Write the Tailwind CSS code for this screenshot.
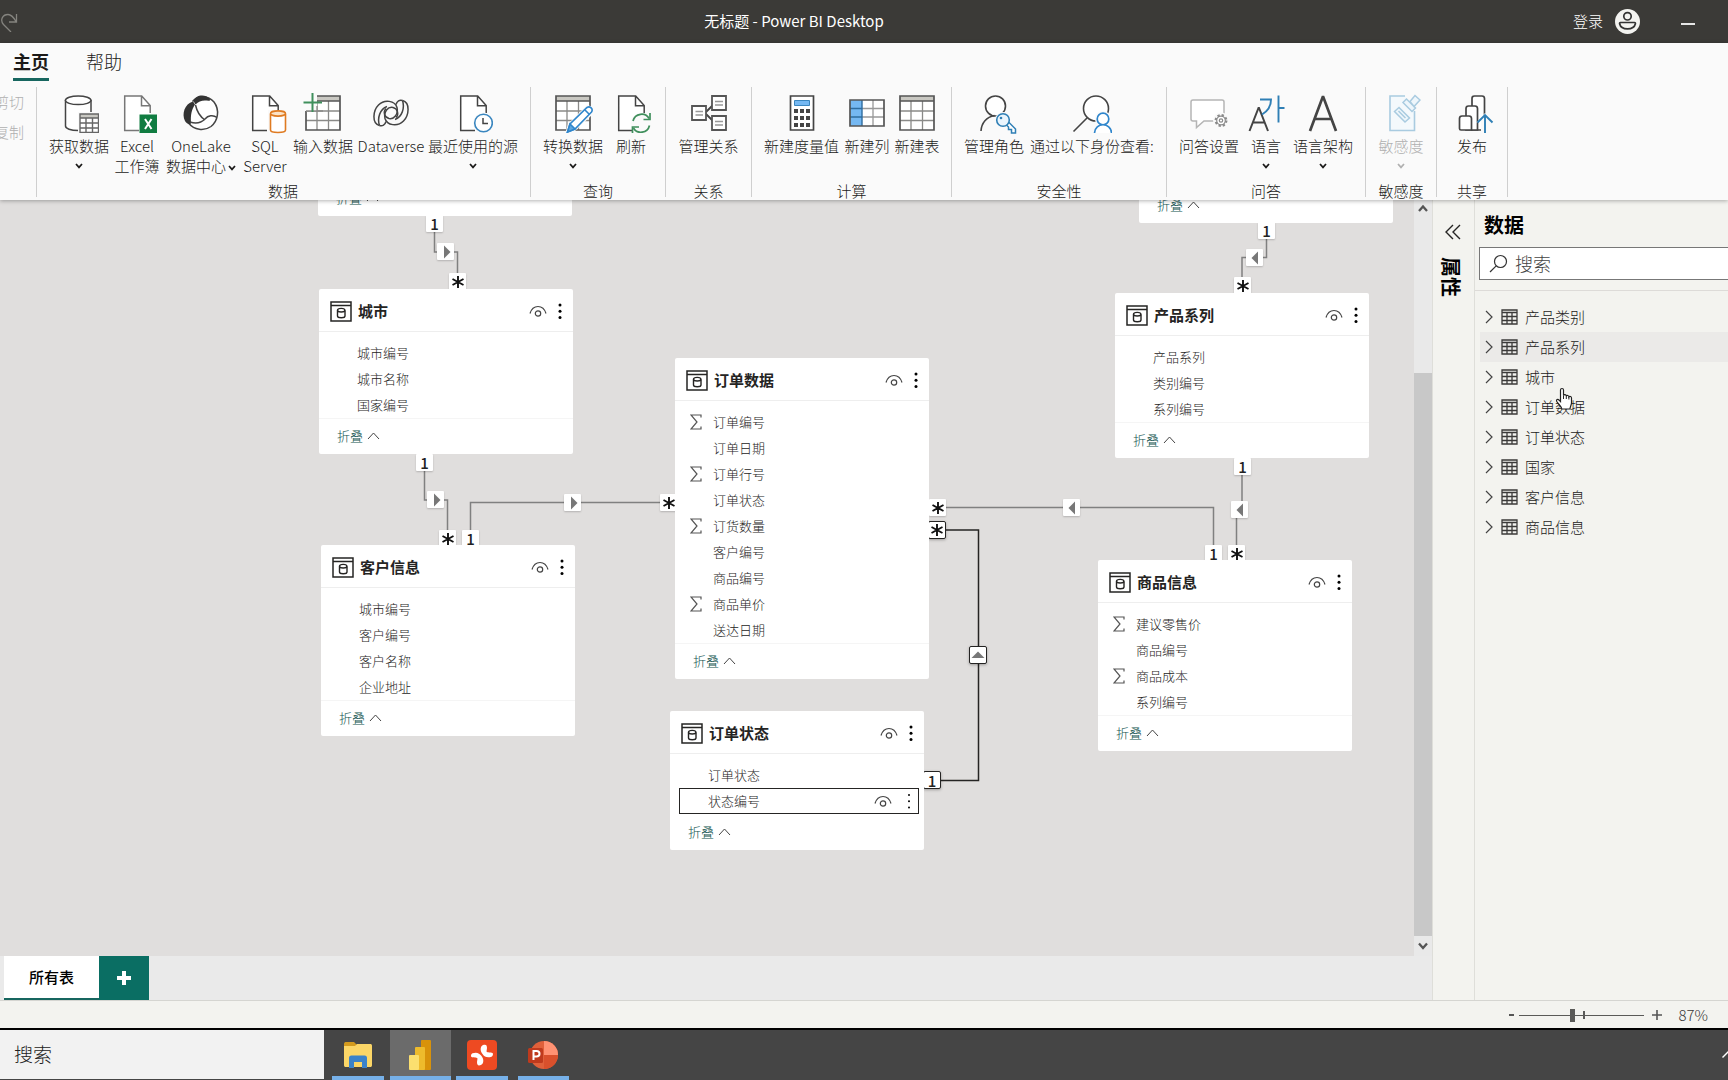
<!DOCTYPE html>
<html lang="zh-CN">
<head>
<meta charset="utf-8">
<meta name="viewport" content="width=device-width, initial-scale=1">
<title>无标题 - Power BI Desktop</title>
<script src="https://cdn.jsdelivr.net/npm/@tailwindcss/browser@4"></script>
</head>
<body class="flex h-screen flex-col overflow-hidden bg-[#f3f3ef] font-['Noto_Sans_CJK_SC',sans-serif] text-[15px] font-light text-[#1b1a19]">

<!-- Shared glyphs -->
<svg class="hidden" aria-hidden="true">
  <symbol id="chev" viewBox="0 0 8 6"><path d="M1 1l3 3.4L7 1" fill="none" stroke="currentColor" stroke-width="1.7"/></symbol>
  <symbol id="page" viewBox="0 0 40 40"><path d="M7.700 3h17l8.500 9.500V37.500H7.700z" fill="#fff"/><path d="M22 37.500H7.700V3h17l8.500 9.500V20M24.500 3v9.700h8.700" fill="none" stroke="currentColor" stroke-width="1.500"/></symbol>
  <symbol id="grid" viewBox="0 0 40 40"><path d="M3 3h34v34H3z" fill="#fff"/><path d="M3 3h34v5H3z" fill="#c9c8c2"/><path d="M3 18h34M3 27.500h34M14 8v29M25.500 8v29" fill="none" stroke="#8a8a88" stroke-width="1.300"/><path d="M3 8h34M3 3h34v34H3z" fill="none" stroke="#555" stroke-width="1.700"/></symbol>
  <symbol id="tbl" viewBox="0 0 17 16"><path d="M1 1h15v14H1zM1 3.500h15M1 7.500h15M1 11.500h15M6 3v12M11 3v12" fill="none" stroke="#3b3a39" stroke-width="1.300"/></symbol>
  <symbol id="store" viewBox="0 0 22 21"><path d="M1 1h20v19H1zM1 4.500h20" fill="none" stroke="#252423" stroke-width="1.500"/><path d="M7.500 9.500v5.500c0 2.400 7.500 2.400 7.500 0V9.500" fill="none" stroke="#252423" stroke-width="1.400"/><ellipse cx="11.200" cy="9.200" rx="3.700" ry="1.800" fill="none" stroke="#252423" stroke-width="1.400"/></symbol>
  <symbol id="eye" viewBox="0 0 18 12"><path d="M1 8.500C2.500 3.500 5.500 1.500 9 1.500S15.500 3.500 17 8.500" fill="none" stroke="#444" stroke-width="1.200"/><circle cx="9" cy="8.500" r="2.700" fill="none" stroke="#444" stroke-width="1.200"/></symbol>
  <symbol id="dots" viewBox="0 0 4 16"><circle cx="2" cy="2" r="1.500"/><circle cx="2" cy="8.200" r="1.500"/><circle cx="2" cy="14.500" r="1.500"/></symbol>
  <symbol id="dots-thin" viewBox="0 0 4 16"><circle cx="2" cy="2" r="1"/><circle cx="2" cy="8.200" r="1"/><circle cx="2" cy="14.500" r="1"/></symbol>
  <symbol id="sum" viewBox="0 0 12 16"><path d="M11 3.500V1H1l6 7-6 7h10v-2.500" fill="none" stroke="#555" stroke-width="1.200"/></symbol>
</svg>

<header class="flex h-[43px] shrink-0 items-center bg-[#3b3a37] text-white">
  <div class="w-8">
    <button class="block" aria-label="恢复"><svg class="size-5 text-[#85847f]" viewBox="0 0 20 20"><path d="M11 20L3.500 12.500C-.5 7.500 3 2.500 8 2.500c3.500 0 6 3.500 8 7M16.500 2v8H9" fill="none" stroke="currentColor" stroke-width="1.300"/></svg></button>
  </div>
  <h1 class="flex-1 text-center text-[15px] font-normal">无标题 - Power BI Desktop</h1>
  <div class="flex w-[172px] items-center pl-[17px]">
    <button>登录</button>
    <button class="ml-3 size-[25px]" aria-label="帐户"><svg viewBox="0 0 25 25"><circle cx="12.500" cy="12.500" r="12.500" fill="#f3f3f0"/><circle cx="12.500" cy="7.300" r="3.700" fill="none" stroke="#333" stroke-width="1.700"/><path d="M5.500 13.500h14c.8 0 1 .6.900 1.300-.7 3-3.900 5.100-7.900 5.100s-7.200-2-7.900-5.100c-.1-.7.100-1.300.9-1.300z" fill="none" stroke="#333" stroke-width="1.700"/></svg></button>
    <button class="ml-10 h-6 w-4 pt-1" aria-label="最小化"><span class="mx-auto block h-[2px] w-[14px] bg-[#e6e6e6]"></span></button>
  </div>
</header>

<div class="relative z-10 h-[157px] shrink-0 bg-[#fafafa] shadow-[0_1px_4px_rgba(0,0,0,0.3)]">
  <nav class="flex h-11 items-start gap-[37px] pl-[13px] text-[18px]">
    <button class="h-[38px] border-b-3 border-[#17665f] pt-px font-bold">主页</button>
    <button class="h-[38px] border-b-3 border-transparent pt-px">帮助</button>
  </nav>
  <div class="flex h-[110px] whitespace-nowrap leading-5">
    <section class="flex w-[37px] shrink-0 flex-col items-end overflow-hidden border-r border-[#cfcfcf] pr-3 leading-[30px] text-[#b0b0b0]">
      <button disabled>剪切</button>
      <button disabled>复制</button>
    </section>

    <section class="flex shrink-0 flex-col justify-between border-r border-[#cfcfcf] pr-[10px] pl-[9px]">
      <div class="flex items-start">
        <button class="flex w-[66px] flex-col items-center pt-[6px]">
          <svg class="mb-[3px] size-10 text-[#444]" viewBox="0 0 40 40"><path d="M6.500 7v26c0 2.500 5 4.500 12.800 4.500S32 35.500 32 33V7" fill="#fff" stroke="currentColor" stroke-width="1.500"/><ellipse cx="19.200" cy="7.300" rx="12.800" ry="4.300" fill="#fff" stroke="currentColor" stroke-width="1.500"/><path d="M19 19h22v22H19z" fill="#fafafa"/><path d="M21 21h18.500v18.500H21z" fill="#fff"/><path d="M21 21h18.500v4H21z" fill="#c9c8c2"/><path d="M21 21h18.500v18.500H21zM21 25h18.500M21 30h18.500M21 35h18.500M27 25v14.500M33.500 25v14.500" fill="none" stroke="#666" stroke-width="1.400"/></svg>
          <span>获取数据</span><svg class="mt-[7px] h-[6px] w-2"><use href="#chev"/></svg>
        </button>
        <button class="flex w-[50px] flex-col items-center pt-[6px]">
          <svg class="mb-[3px] size-10 text-[#777]" viewBox="0 0 40 40"><use href="#page"/><path d="M22.500 21.500h17.500v18.500H22.500z" fill="#107c41"/><path d="M28 26l6.500 10M34.500 26L28 36" stroke="#fff" stroke-width="2"/></svg>
          <span>Excel<br>工作簿</span>
        </button>
        <button class="flex w-[78px] flex-col items-center pt-[6px]">
          <svg class="mb-[3px] size-10 text-[#444]" viewBox="0 0 40 40"><path d="M11.500 8.500C16 3 27 2 33 9c6 8 4 19-3 24.500-7 5-17 3.500-22-3" fill="#fff" stroke="currentColor" stroke-width="1.500"/><path d="M12.500 8C14 2 24 .5 28.500 5.500c1 1.500.5 2.500-1 2.300-5.500-1-9.500.2-13 3.700z" fill="#333"/><path d="M12 8.500C3.500 11 .5 21 4 28c1.500 3 5.500 4.500 6 2-.5-8 .5-13.500 4-18.500z" fill="#333"/><path d="M14.500 12c1.500 7 5 12 9.500 15M9 29c6 2 11 1 15-3 3-3.500 8-4.500 12-1.500" fill="none" stroke="currentColor" stroke-width="1.500"/></svg>
          <span>OneLake<br>数据中心<svg class="ml-[2px] inline h-[6px] w-2"><use href="#chev"/></svg></span>
        </button>
        <button class="flex w-[50px] flex-col items-center pt-[6px]">
          <svg class="mb-[3px] size-10 overflow-visible text-[#444]" viewBox="0 0 40 40"><use href="#page"/><path d="M23 17h18v24H23z" fill="#fafafa"/><path d="M25.500 21v16c0 1.500 3 2.500 7.500 2.500s7.500-1 7.500-2.500V21" fill="#fff" stroke="#df7b22" stroke-width="1.600"/><ellipse cx="33" cy="20.500" rx="7.500" ry="2.600" fill="#fbe3c8" stroke="#df7b22" stroke-width="1.600"/></svg>
          <span>SQL<br>Server</span>
        </button>
        <button class="flex w-[66px] flex-col items-center pt-[6px]">
          <svg class="mb-[3px] size-10" viewBox="0 0 40 40"><use href="#grid"/><path d="M0 0h14v18H0z" fill="#fafafa"/><path d="M3 18h17M14 13v6" stroke="#8a8a88" stroke-width="1.300"/><path d="M9.500 0v19M.5 9.500h18.500" stroke="#3f8f5c" stroke-width="2"/></svg>
          <span>输入数据</span>
        </button>
        <button class="flex w-[70px] flex-col items-center pt-[6px]">
          <svg class="mb-[3px] size-10 text-[#444]" viewBox="0 0 40 40"><g fill="none" stroke="currentColor" stroke-width="1.500"><path d="M31.500 7.500c8 2 6.500 15 1 20.500-6 6-16.500 4.500-18.500-2.500-1.500-7 3-12 8-11 5 1.200 6 7 3 10"/><path d="M31.500 7.500C34 15 31 24 24 26.500"/><path d="M8.500 32.500C.5 30.500 2 17.500 7.500 12c6-6 16.500-4.500 18.500 2.500 1.500 7-3 12-8 11-5-1.200-6-7-3-10"/><path d="M8.500 32.500C6 25 9 16 16 13.500"/><path d="M31.500 7.500c-3-1-5.500.5-6.500 4M8.500 32.500c3 1 5.500-.5 6.500-4"/></g></svg>
          <span>Dataverse</span>
        </button>
        <button class="flex w-[94px] flex-col items-center pt-[6px]">
          <svg class="mb-[3px] size-10 text-[#444]" viewBox="0 0 40 40"><use href="#page"/><circle cx="30.500" cy="30" r="10.500" fill="#fafafa"/><circle cx="30.500" cy="30" r="8.800" fill="#fff" stroke="#3a86bf" stroke-width="1.600"/><path d="M30 25v5.500h5" fill="none" stroke="currentColor" stroke-width="1.500"/></svg>
          <span>最近使用的源</span><svg class="mt-[7px] h-[6px] w-2"><use href="#chev"/></svg>
        </button>
      </div>
      <h2 class="text-center leading-3">数据</h2>
    </section>

    <section class="flex shrink-0 flex-col justify-between border-r border-[#cfcfcf] px-[9px]">
      <div class="flex items-start">
        <button class="flex w-[66px] flex-col items-center pt-[6px]">
          <svg class="mb-[3px] size-10" viewBox="0 0 40 40"><use href="#grid"/><path d="M12 41l3-10L34 12l7 2v6L22 38z" fill="#fafafa"/><path d="M14.500 39l2.500-8L34 14.500c3-2 6.500 1.500 4.500 4.500L22 36z" fill="#fff" stroke="#2f86cc" stroke-width="1.600"/><path d="M14.500 39l2.500-8 5 5zM32 17l4.500 4.500" fill="#5da6df" stroke="#2f86cc" stroke-width="1.600"/></svg>
          <span>转换数据</span><svg class="mt-[7px] h-[6px] w-2"><use href="#chev"/></svg>
        </button>
        <button class="flex w-[50px] flex-col items-center pt-[6px]">
          <svg class="mb-[3px] size-10 text-[#444]" viewBox="0 0 40 40"><use href="#page"/><circle cx="30" cy="30.500" r="10.500" fill="#fafafa"/><g fill="none" stroke="#3f8f5c" stroke-width="1.700"><path d="M22 28c2-8 12.500-9 16-2.500M38.500 32.500c-2 8-12.500 9-16 2.500"/><path d="M39 20v6.500h-6.500M21.500 40.500V34H28"/></g></svg>
          <span>刷新</span>
        </button>
      </div>
      <h2 class="text-center leading-3">查询</h2>
    </section>

    <section class="flex shrink-0 flex-col justify-between border-r border-[#cfcfcf] px-[9px]">
      <button class="flex w-[67px] flex-col items-center pt-[6px]">
        <svg class="mb-[3px] size-10" viewBox="0 0 40 40"><path d="M17 19l7-7M17 21l7 7" stroke="#444" stroke-width="1.800"/><g fill="#fff" stroke="#555" stroke-width="1.800"><path d="M3 13h14v14H3zM23 3h14v14H23zM23 23h14v14H23z"/></g><path d="M6.500 18.500h7.500M6.500 22h7.500M26 8.500h8M26 12h8M26 28.500h8M26 32h8" stroke="#999" stroke-width="1.300"/></svg>
        <span>管理关系</span>
      </button>
      <h2 class="text-center leading-3">关系</h2>
    </section>

    <section class="flex shrink-0 flex-col justify-between border-r border-[#cfcfcf] px-[9px]">
      <div class="flex items-start">
        <button class="flex w-[81px] flex-col items-center pt-[6px]">
          <svg class="mb-[3px] size-10" viewBox="0 0 40 40"><path d="M8.500 3h23v34h-23z" fill="#fff" stroke="#444" stroke-width="1.700"/><path d="M12.500 7.500h15v5h-15z" fill="#75b8f2" stroke="#3a86bf"/><path d="M12 16h4v4h-4zM18 16h4v4h-4zM24 16h4v4h-4zM12 23h4v4h-4zM18 23h4v4h-4zM24 23h4v4h-4zM12 30h4v4h-4zM18 30h4v4h-4zM24 30h4v4h-4z" fill="#444"/></svg>
          <span>新建度量值</span>
        </button>
        <button class="flex w-[50px] flex-col items-center pt-[6px]">
          <svg class="mb-[3px] size-10" viewBox="0 0 40 40"><path d="M3 7h34v26H3z" fill="#fff"/><path d="M3 7h12v26H3z" fill="#75b8f2"/><path d="M15 15.500h22M15 24h22M26 7v26" stroke="#999" stroke-width="1.300"/><path d="M3 15.500h12M3 24h12M15 7v26" stroke="#2f6da0" stroke-width="1.400"/><path d="M3 7h34v26H3z" fill="none" stroke="#555" stroke-width="1.700"/></svg>
          <span>新建列</span>
        </button>
        <button class="flex w-[50px] flex-col items-center pt-[6px]">
          <svg class="mb-[3px] size-10"><use href="#grid"/></svg>
          <span>新建表</span>
        </button>
      </div>
      <h2 class="text-center leading-3">计算</h2>
    </section>

    <section class="flex shrink-0 flex-col justify-between border-r border-[#cfcfcf] px-[9px]">
      <div class="flex items-start">
        <button class="flex w-[66px] flex-col items-center pt-[6px]">
          <svg class="mb-[3px] size-10 overflow-visible" viewBox="0 0 40 40"><circle cx="21.500" cy="13" r="10" fill="#fff" stroke="#444" stroke-width="1.600"/><path d="M7 38c.5-8 5.500-14 13.500-15.500" fill="none" stroke="#444" stroke-width="1.600"/><circle cx="29" cy="27" r="8" fill="#fafafa"/><path d="M33 24.500l-1.500 6.500 3 3v2.500h3v3.500h4v-4l-8-8z" fill="#fff" stroke="#2f7fb5" stroke-width="1.500"/><circle cx="29" cy="27" r="6.300" fill="#eaf5fd" stroke="#2f7fb5" stroke-width="1.600"/><circle cx="27" cy="25" r="1.300" fill="#2f7fb5"/></svg>
          <span>管理角色</span>
        </button>
        <button class="flex w-[130px] flex-col items-center pt-[6px]">
          <svg class="mb-[3px] size-10" viewBox="0 0 40 40"><circle cx="24" cy="15.500" r="12.500" fill="#fff" stroke="#444" stroke-width="1.600"/><path d="M15 25L1.500 38.500" stroke="#444" stroke-width="1.600"/><path d="M23 39c-1-20 17-20 17 0z" fill="#fafafa"/><circle cx="31" cy="26" r="8" fill="#fafafa"/><circle cx="31" cy="26" r="5.800" fill="#fff" stroke="#2f86cc" stroke-width="1.700"/><path d="M22.500 40c.5-11 16.500-11 17 0" fill="#fff" stroke="#2f86cc" stroke-width="1.700"/></svg>
          <span>通过以下身份查看:</span>
        </button>
      </div>
      <h2 class="text-center leading-3">安全性</h2>
    </section>

    <section class="flex shrink-0 flex-col justify-between border-r border-[#cfcfcf] px-[9px]">
      <div class="flex items-start">
        <button class="flex w-[66px] flex-col items-center pt-[6px]">
          <svg class="mb-[3px] size-10" viewBox="0 0 40 40"><path d="M4 7h29c1.500 0 2 .5 2 2v17c0 1.500-.5 2-2 2H15l-7.500 6.500V28H4c-1.500 0-2-.5-2-2V9c0-1.500.5-2 2-2z" fill="#fff" stroke="#b5b5b5" stroke-width="1.500"/><circle cx="32" cy="27.500" r="8" fill="#fafafa"/><circle cx="32" cy="27.500" r="5.200" fill="none" stroke="#8a8a8a" stroke-width="2.500" stroke-dasharray="2.200 1.880"/><circle cx="32" cy="27.500" r="4.300" fill="#fff" stroke="#8a8a8a" stroke-width="1.200"/><circle cx="32" cy="27.500" r="1.700" fill="none" stroke="#8a8a8a" stroke-width="1.200"/></svg>
          <span>问答设置</span>
        </button>
        <button class="flex w-12 flex-col items-center pt-[6px]">
          <svg class="mb-[3px] size-10 overflow-visible" viewBox="0 0 40 40"><path d="M3.500 38l9-23h.5l9 23M7 29.500h12" fill="none" stroke="#444" stroke-width="2"/><path d="M14 6.500h11c0 7-3 11.500-9 15M32.500 2.500v27M32.500 15h6" fill="none" stroke="#2f7fb5" stroke-width="1.900"/></svg>
          <span>语言</span><svg class="mt-[7px] h-[6px] w-2"><use href="#chev"/></svg>
        </button>
        <button class="flex w-[66px] flex-col items-center pt-[6px]">
          <svg class="mb-[3px] size-10" viewBox="0 0 40 40"><path d="M7 38L19.700 4h.6L33 38M11.500 26h17" fill="none" stroke="#444" stroke-width="2.700"/></svg>
          <span>语言架构</span><svg class="mt-[7px] h-[6px] w-2"><use href="#chev"/></svg>
        </button>
      </div>
      <h2 class="text-center leading-3">问答</h2>
    </section>

    <section class="flex shrink-0 flex-col justify-between border-r border-[#cfcfcf] px-[9px]">
      <button class="flex w-[52px] flex-col items-center pt-[6px] text-[#b0b0b0]" disabled>
        <svg class="mb-[3px] size-10" viewBox="0 0 40 40"><path d="M24 3H9v34.500h24.500V18" fill="#f4f9fc" stroke="#a9cbe0" stroke-width="1.600"/><g fill="#eef6fb" stroke="#a9cbe0" stroke-width="1.500"><path d="M18 14.500l-4.500 4 10.500 10.500 4.500-4z"/><path d="M17.500 18l7 7"/><path d="M25.500 6L22 9.500l9 9 3.500-3.500zM29 8.500l5-6 5 4.500-6 6.500z"/></g></svg>
        <span>敏感度</span><svg class="mt-[7px] h-[6px] w-2"><use href="#chev"/></svg>
      </button>
      <h2 class="text-center leading-3">敏感度</h2>
    </section>

    <section class="flex shrink-0 flex-col justify-between border-r border-[#cfcfcf] px-[9px]">
      <button class="flex w-[52px] flex-col items-center pt-[6px]">
        <svg class="mb-[3px] size-10 overflow-visible" viewBox="0 0 40 40"><g fill="#fff" stroke="#444" stroke-width="1.700"><path d="M20 13V5.500c0-2 .5-2.500 2.500-2.500H30c2 0 2.500.5 2.500 2.500V37H20z"/><path d="M14 23v-7.500c0-2 .5-2.500 2.500-2.500H23c2 0 2.500.5 2.500 2.500V37H14z"/><path d="M7.500 35.500v-10c0-2 .5-2.500 2.500-2.500h7c2 0 2.500.5 2.500 2.500V37H9c-1 0-1.500-.5-1.500-1.500z"/></g><path d="M24 30l9-10 9 10-5-2v12h-8V27z" fill="#fafafa"/><path d="M33 40V22M25.500 29.500L33 22l7.500 7.500" fill="none" stroke="#2f7fb5" stroke-width="1.900"/></svg>
        <span>发布</span>
      </button>
      <h2 class="text-center leading-3">共享</h2>
    </section>
  </div>
</div>

<main class="flex min-h-0 flex-1">
  <div class="flex min-w-0 flex-1 flex-col bg-[#eaeaea]">
    <div class="flex min-h-0 flex-1">
      <!-- Model diagram: a free canvas of tables and relationships -->
      <div id="canvas" class="relative min-w-0 flex-1 overflow-hidden bg-[#e0dedd]">
        <svg class="absolute left-0 top-0 h-full w-full" fill="none" stroke="#808080" stroke-width="1.500">
          <path d="M434.500 30V52h23v22M424.500 269V300h23v31M470.500 331V302.500H661M945 307.500h268.500V345M1266.500 37V57.500h-24.500V78M1242 273v36M1236.500 309v36"/>
          <path d="M945 330h33.500V580.500H940" stroke="#252423"/>
        </svg>
      </div>
      <div class="flex w-[18px] flex-col bg-[#e9e9e9] text-[#555]">
        <svg class="h-[17px] w-[18px]" viewBox="0 0 18 17"><path d="M5 11l4-4.500 4 4.500" fill="none" stroke="currentColor" stroke-width="2.300"/></svg>
        <div class="h-[156px]"></div>
        <div class="flex-1 bg-[#c8c8c8]"></div>
        <svg class="h-5 w-[18px]" viewBox="0 0 18 20"><path d="M5 7.500l4 4.500 4-4.500" fill="none" stroke="currentColor" stroke-width="2.300"/></svg>
      </div>
    </div>
    <div class="flex h-11 shrink-0 pl-1">
      <button class="w-[95px] border-b-2 border-[#17665f] bg-white font-medium text-black">所有表</button>
      <button class="flex w-[50px] items-center justify-center bg-[#0a6e63]" aria-label="添加"><svg class="size-[14px]" viewBox="0 0 14 14"><path d="M7 0v14M0 7h14" stroke="#fff" stroke-width="4"/></svg></button>
    </div>
  </div>

  <aside class="flex w-[42px] shrink-0 flex-col items-center border-l border-[#deded9] pt-[23px] pr-px">
    <button aria-label="展开"><svg class="size-[18px]" viewBox="0 0 18 18"><path d="M9 2L2 9l7 7M16 2L9 9l7 7" fill="none" stroke="#252423" stroke-width="1.400"/></svg></button>
    <h2 class="mt-4 pr-1 text-[20px] leading-6 font-bold text-black [text-orientation:sideways] [writing-mode:vertical-rl]">属性</h2>
  </aside>

  <aside class="w-[254px] shrink-0 border-l border-[#deded9]">
    <h2 class="pl-[9px] pt-3 text-[20px] leading-[26px] font-bold text-black">数据</h2>
    <label class="mt-[9px] ml-1 flex h-[33px] items-center gap-[7px] border border-r-0 border-[#777] bg-white pl-[9px]">
      <svg class="size-[19px] shrink-0" viewBox="0 0 19 19"><circle cx="11.500" cy="7.500" r="6" fill="none" stroke="#333" stroke-width="1.200"/><path d="M7.200 11.800L1 18" stroke="#333" stroke-width="1.200"/></svg>
      <input type="search" aria-label="搜索" placeholder="搜索" class="w-full min-w-0 text-[18px] outline-none placeholder:text-[#444]">
    </label>
    <hr class="mt-[10px] border-[#dddbd8]">
    <ul id="tables" class="mt-[11px] pl-[5px]"></ul>
  </aside>
</main>

<footer class="flex h-7 shrink-0 items-center justify-end border-t border-[#d5d5d1] pt-px pr-5 text-[#3b3a39]">
  <button class="w-[15px] text-center" aria-label="缩小"><span class="mx-auto block h-[2px] w-[5px] bg-[#555]"></span></button>
  <div class="relative flex h-[14px] w-[125px] items-center">
    <span class="absolute left-16 top-[3px] h-2 w-[2px] bg-[#5a5a58]"></span>
    <input type="range" aria-label="缩放" min="0" max="120" value="51" class="h-px w-full appearance-none bg-[#5a5a58] [&::-webkit-slider-thumb]:h-[13px] [&::-webkit-slider-thumb]:w-[5px] [&::-webkit-slider-thumb]:appearance-none [&::-webkit-slider-thumb]:bg-[#5a5a58]">
  </div>
  <button class="ml-2" aria-label="放大"><svg class="size-[10px]" viewBox="0 0 10 10"><path d="M5 0v10M0 5h10" stroke="#555" stroke-width="1.600"/></svg></button>
  <output class="w-[46px] text-right">87%</output>
</footer>

<div class="flex h-[52px] shrink-0 border-t-2 border-black bg-[#454545]">
  <input type="search" aria-label="搜索" placeholder="搜索" class="mb-px w-[324px] bg-[#f2f2f2] pl-[14px] text-[19px] outline-none placeholder:text-[#222]">
  <button class="ml-2 flex w-[52px] items-center justify-center border-b-4 border-[#76b0e8] pt-[3px]" aria-label="文件资源管理器"><svg class="size-8" viewBox="0 0 32 32"><path d="M2 5c0-1 .5-2 1.500-2H12l3 3v6H2z" fill="#d39a1e"/><path d="M2 7h11l2-2h13c1.500 0 2 .5 2 2v19c0 1.500-.5 2-2 2H4c-1.500 0-2-.5-2-2z" fill="#fbd667"/><path d="M7 29V19c0-1.500.7-2.500 2.500-2.500h13c1.800 0 2.500 1 2.500 2.500v10h-5v-6h-8v6z" fill="#3b82c9"/></svg></button>
  <button class="ml-[6px] flex w-[61px] items-center justify-center border-b-4 border-[#76b0e8] bg-[#6b6b6b] pt-[3px]" aria-label="Power BI"><svg class="size-8" viewBox="0 0 32 32"><rect x="16" y="1" width="10" height="30" rx="1" fill="#d8920a"/><rect x="10" y="8" width="10" height="23" rx="1" fill="#eebb2c"/><rect x="4" y="16" width="10" height="15" rx="1" fill="#fbdf6f"/></svg></button>
  <button class="ml-[5px] flex w-[52px] items-center justify-center border-b-4 border-[#76b0e8] pt-[3px]" aria-label="Xmind"><svg class="size-8" viewBox="0 0 32 32"><rect x="1" y="1" width="30" height="30" rx="4" fill="#ee4a22"/><path d="M17 6c3-1 4 0 4 3l-.5 3.500c1 1.500 4 .5 6 1.500 1 .7.500 3-1 3.700-4 1.500-7 .3-9-2.700C14 12 14 7.500 17 6zM15 26c-3 1-4 0-4-3l.5-3.500c-1-1.500-4-.5-6-1.500-1-.7-.5-3 1-3.700 4-1.500 7-.3 9 2.700 2.500 3 2.500 7.500-.5 9z" fill="#fff"/></svg></button>
  <button class="ml-[10px] flex w-[51px] items-center justify-center border-b-4 border-[#76b0e8] pt-[3px]" aria-label="PowerPoint"><svg class="size-8" viewBox="0 0 32 32"><circle cx="16" cy="16" r="14" fill="#e0603a"/><path d="M16 2a14 14 0 0 1 14 14H16z" fill="#ff9273"/><path d="M16 16h14a14 14 0 0 1-14 14z" fill="#d9502c"/><rect x="0" y="9" width="15" height="15" rx="1.500" fill="#bf3a1d"/><path d="M5.500 21v-9h3c4 0 4 5.500 0 5.500h-3" fill="none" stroke="#fff" stroke-width="2"/></svg></button>
  <svg class="my-auto ml-auto h-4 w-[6px]" viewBox="0 0 6 16"><path d="M.500 10.500L7 4" stroke="#fff" stroke-width="1.500"/></svg>
</div>

<!-- Pointer -->
<svg class="pointer-events-none absolute left-[1555px] top-[387px] z-20 h-6 w-[18px]" viewBox="0 0 18 24"><path d="M5.500 14.500V3c0-2 3-2 3 0v5.500c.5-1.500 2.800-1 2.800.5.500-1 2.500-.7 2.600.8.800-.9 2.600-.3 2.600 1.200V16c0 2-1.500 3.500-1.500 6H6.800c0-2-3-4.500-5-7.500-1-2 1-2.800 2.200-1.500z" fill="#fff" stroke="#222" stroke-width="1.200"/><path d="M8.500 8.500V12M11.300 9v3M13.900 10v2.500" stroke="#222"/></svg>

<script>
const canvas = document.getElementById('canvas');

const star = '<path d="M9 3v12M3.500 6l11 6M3.500 12l11-6" stroke="#111" stroke-width="1.900"/>';
const tri = { r: 'M7 2.500v13l6.500-6.500z', l: 'M12 2.500v13L5.500 9z', u: 'M2.500 12h13L9 5.500z' };

// Relationship end markers and direction arrows: left, top, glyph, selected
const marks = [
  [426, 15, '1'], [437, 43, 'r'], [449, 73, '*'],
  [416, 254, '1'], [427, 291, 'r'], [439, 330, '*'], [462, 330, '1'], [564, 294, 'r'], [660, 294, '*'],
  [929, 299, '*'], [1063, 299, 'l'], [1205, 345, '1'], [1228, 345, '*'],
  [1258, 22, '1'], [1246, 49, 'l'], [1234, 77, '*'], [1234, 258, '1'], [1231, 301, 'l'],
  [928, 321, '*', 1], [969, 446, 'u', 1], [923, 571, '1', 1]
];
for (const [x, y, g, on] of marks) {
  const box = on
    ? 'absolute flex items-center justify-center size-[18px] rounded-[2px] border border-[#252423] bg-white shadow-[0_1px_3px_rgba(0,0,0,0.3)]'
    : 'absolute flex items-center justify-center size-[17px] rounded-[1px] bg-white shadow-[0_1px_2px_rgba(0,0,0,0.2)]';
  const inner = g === '1'
    ? '<span class="text-[15px] leading-none font-medium text-[#222]">1</span>'
    : `<svg class="size-[18px] shrink-0" viewBox="0 0 18 18">${g === '*' ? star : `<path d="${tri[g]}" fill="#777"/>`}</svg>`;
  canvas.insertAdjacentHTML('beforeend', `<span class="${box}" style="left:${x}px;top:${y}px">${inner}</span>`);
}

// A leading "+" marks a summable column, "=" the selected one.
// Cards without a title are scrolled out of view down to their footer.
const cards = [
  [318, -20, '', []],
  [1139, -13, '', []],
  [319, 89, '城市', ['城市编号', '城市名称', '国家编号']],
  [321, 345, '客户信息', ['城市编号', '客户编号', '客户名称', '企业地址']],
  [675, 158, '订单数据', ['+订单编号', '订单日期', '+订单行号', '订单状态', '+订货数量', '客户编号', '商品编号', '+商品单价', '送达日期']],
  [670, 511, '订单状态', ['订单状态', '=状态编号']],
  [1115, 93, '产品系列', ['产品系列', '类别编号', '系列编号']],
  [1098, 360, '商品信息', ['+建议零售价', '商品编号', '+商品成本', '系列编号']]
];

const field = f => {
  const name = f.replace(/^[+=]/, '');
  if (f[0] === '=') return `<li class="mr-[5px] ml-[9px] flex h-[26px] items-center border border-[#252423] pl-7 pr-[7px]">
    <span class="flex-1">${name}</span><svg class="h-3 w-[18px]"><use href="#eye"/></svg><svg class="ml-[15px] h-4 w-1"><use href="#dots-thin"/></svg></li>`;
  const sum = f[0] === '+' ? '<svg class="h-4 w-3"><use href="#sum"/></svg>' : '';
  return `<li class="flex h-[26px] items-center pl-[15px]"><span class="w-[23px]">${sum}</span>${name}</li>`;
};

const body = (title, fields) => title && `
  <header class="flex h-[43px] items-center border-b border-[#eeeeee] px-[11px] pt-[2px]">
    <svg class="h-[21px] w-[22px]"><use href="#store"/></svg>
    <h3 class="ml-[6px] flex-1 text-[15px] font-bold text-[#252423]">${title}</h3>
    <button aria-label="隐藏"><svg class="h-3 w-[18px]"><use href="#eye"/></svg></button>
    <button class="ml-[11px]" aria-label="更多"><svg class="h-4 w-1"><use href="#dots"/></svg></button>
  </header>
  <ul class="pt-2">${fields.map(field).join('')}</ul>`;

for (const [x, y, title, fields] of cards) {
  const selected = fields.some(f => f[0] === '=');
  canvas.insertAdjacentHTML('beforeend', `
    <article class="absolute w-[254px] rounded-[2px] bg-white text-[13px] text-[#252423]" style="left:${x}px;top:${y}px">
      ${body(title, fields)}
      <button class="flex h-9 w-full items-center border-t pb-px pl-[18px] text-[#0f534e] ${selected || !title ? 'border-transparent' : 'border-[#f5f5f5]'}">折叠
        <svg class="ml-1 h-2 w-[13px]" viewBox="0 0 13 8"><path d="M1 7l5.500-6L12 7" fill="none" stroke="#444"/></svg></button>
    </article>`);
}

const names = ['产品类别', '产品系列', '城市', '订单数据', '订单状态', '国家', '客户信息', '商品信息'];
document.getElementById('tables').innerHTML = names.map((n, i) => `
  <li class="flex h-[30px] items-center pl-[5px] ${i === 1 ? 'bg-[#ebeae8]' : ''}">
    <svg class="h-[14px] w-2" viewBox="0 0 8 14"><path d="M1 1l6 6-6 6" fill="none" stroke="#444" stroke-width="1.200"/></svg>
    <svg class="ml-2 h-4 w-[17px]"><use href="#tbl"/></svg>
    <span class="ml-[7px]">${n}</span>
  </li>`).join('');
</script>
</body>
</html>
